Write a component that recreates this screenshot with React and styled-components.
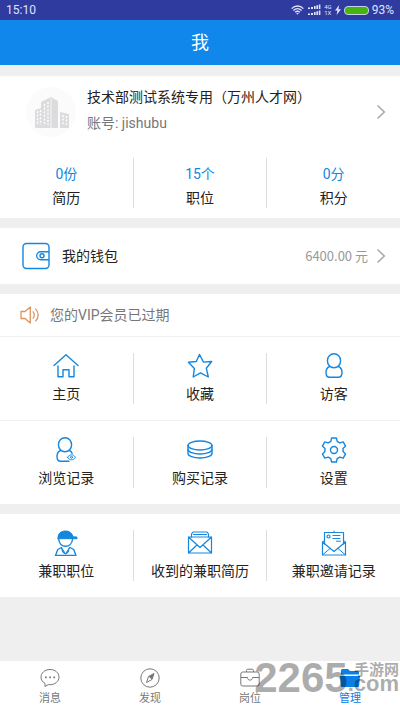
import styled, { createGlobalStyle } from "styled-components";

const BLUE = "#1587dd";

const stats = [
  { value: "0份", label: "简历" },
  { value: "15个", label: "职位" },
  { value: "0分", label: "积分" },
];

const menuRows = [
  [
    { label: "主页", Icon: HomeIcon },
    { label: "收藏", Icon: StarIcon },
    { label: "访客", Icon: VisitorIcon },
  ],
  [
    { label: "浏览记录", Icon: HistoryIcon },
    { label: "购买记录", Icon: CoinsIcon },
    { label: "设置", Icon: GearIcon },
  ],
];

const partTimeRow = [
  { label: "兼职职位", Icon: WorkerIcon },
  { label: "收到的兼职简历", Icon: ResumeMailIcon },
  { label: "兼职邀请记录", Icon: InviteIcon },
];

const tabs = [
  { label: "消息", Icon: MessageIcon },
  { label: "发现", Icon: CompassIcon },
  { label: "岗位", Icon: BriefcaseIcon },
  { label: "管理", Icon: FolderIcon, active: true },
];

function App() {
  return (
    <>
      <GlobalStyle />
      <Page>
        <StatusBar />
        <Header>
          <Title>我</Title>
        </Header>

        <Content>
          <Panel>
            <Profile>
              <Avatar />
              <ProfileText>
                <span>技术部测试系统专用（万州人才网）</span>
                <Account>账号: jishubu</Account>
              </ProfileText>
              <Chevron />
            </Profile>
            <StatRow>
              {stats.map((e) => (
                <Cell key={e.label}>
                  <StatValue>{e.value}</StatValue>
                  <span>{e.label}</span>
                </Cell>
              ))}
            </StatRow>
          </Panel>

          <Wallet>
            <WalletIcon />
            <WalletLabel>我的钱包</WalletLabel>
            <Balance>6400.00 元</Balance>
            <Chevron />
          </Wallet>

          <Panel>
            <Notice>
              <SpeakerIcon />
              您的VIP会员已过期
            </Notice>
            {menuRows.map((row, i) => (
              <MenuRow items={row} key={i} />
            ))}
          </Panel>

          <Panel>
            <MenuRow items={partTimeRow} />
          </Panel>
        </Content>

        <TabBar>
          {tabs.map(({ label, Icon, active }) => (
            <Tab href="#" key={label} $active={active}>
              <Icon />
              {label}
            </Tab>
          ))}
          <Watermark>
            <WatermarkNumber>2265</WatermarkNumber>
            <WatermarkSide>
              <WatermarkName>手游网</WatermarkName>
              <WatermarkDomain>.com</WatermarkDomain>
            </WatermarkSide>
          </Watermark>
        </TabBar>
      </Page>
    </>
  );
}

function MenuRow({ items }) {
  return (
    <Menu>
      {items.map(({ label, Icon }) => (
        <MenuCell key={label}>
          <MenuButton type="button">
            <Icon />
            {label}
          </MenuButton>
        </MenuCell>
      ))}
    </Menu>
  );
}

function StatusBar() {
  return (
    <Status>
      <Clock>15:10</Clock>
      <svg width="13" height="10" viewBox="0 0 13 10" fill="none" stroke="#dfe3ff" strokeWidth="1.3">
        <path d="M.6 3.6C4 .1 9 .1 12.4 3.6M2.4 5.5c2.4-2.4 5.8-2.4 8.2 0M4.2 7.3c1.4-1.4 3.2-1.4 4.6 0" />
        <path d="M5.2 8.1h2.6L6.5 9.8z" fill="#dfe3ff" stroke="none" />
      </svg>
      <svg width="14" height="12" viewBox="0 0 14 12" fill="#dfe3ff">
        <path d="M1 3.5h2V5H1zM4 3h2v2H4zM7 2h1.6v3H7zM9.4 1.2H11V5H9.4zM11.8.5h1.6V5h-1.6z" />
        <path d="M1 9.5h2V11H1zM4 9h2v2H4zM7 8h1.6v3H7zM9.4 7.2H11V11H9.4zM11.8 6.5h1.6V11h-1.6z" />
      </svg>
      <Network>
        <span>4G</span>
        <span>1X</span>
      </Network>
      <svg width="6" height="10" viewBox="0 0 6 10" fill="#dfe3ff">
        <path d="M4.2 0L0 5.6h2.4L1.6 10 6 4.2H3.4z" />
      </svg>
      <Battery />
      <span>93%</span>
    </Status>
  );
}

function Chevron() {
  return (
    <svg width="10" height="16" viewBox="0 0 10 16" fill="none" stroke="#aaa" strokeWidth="1.6">
      <path d="M1.5 1.5L8.3 8l-6.8 6.5" />
    </svg>
  );
}

function Avatar() {
  return (
    <svg width="50" height="50" viewBox="0 0 50 50">
      <circle cx="25" cy="25" r="25" fill="#fbfbfb" />
      <path fill="#dcdcde" d="M9 23l6-2v-6l10-5v31H9zM25 10l7 4v27h-7zM34 25l9 2v14h-9z" />
      <g stroke="#fff" strokeWidth="1.4" strokeDasharray="2 1.6" fill="none">
        <path d="M11.5 24v14M14.500 23v15M18.500 17v21M22 15v23" />
        <path d="M37 28v10M40.500 29v9" />
      </g>
      <path d="M25 11v30" stroke="#f4f4f4" />
    </svg>
  );
}

function WalletIcon() {
  return (
    <svg width="28" height="28" viewBox="0 0 28 28" fill="none" stroke={BLUE} strokeWidth="1.4">
      <rect x="1" y="1.5" width="26" height="25" rx="3.5" />
      <path d="M27 9.8h-8.3a4 4 0 0 0 0 8H27" />
      <circle cx="20" cy="13.8" r="2" />
    </svg>
  );
}

function SpeakerIcon() {
  return (
    <svg width="20" height="18" viewBox="0 0 20 18" fill="none" stroke="#dd9460" strokeWidth="1.3">
      <path d="M1 5.5h4L10.3 1v16L5 12.5H1z" strokeLinejoin="round" />
      <path d="M12.8 5.4c1.9 2 1.9 5.2 0 7.2M15.3 2.6c3.8 3.6 3.8 9.2 0 12.8" />
    </svg>
  );
}

function LineIcon({ children }) {
  return (
    <svg
      width="26"
      height="26"
      viewBox="0 0 26 26"
      fill="none"
      stroke={BLUE}
      strokeWidth="1.4"
      strokeLinejoin="round"
      strokeLinecap="round"
    >
      {children}
    </svg>
  );
}

function HomeIcon() {
  return (
    <LineIcon>
      <path d="M1 12.5L13 1.8l12 10.700" />
      <path d="M5 13v10.800h5v-7h6v7h5V13" />
    </LineIcon>
  );
}

function StarIcon() {
  return (
    <LineIcon>
      <path d="M12.500 1.500l4 7.600 8.200-.6-5.400 6.700 2 8.800-7.800-4.200-7.300 4.200 1.200-8.600-6-6.100 7.900-.8z" />
    </LineIcon>
  );
}

function VisitorIcon() {
  return (
    <LineIcon>
      <ellipse cx="13" cy="7.8" rx="6.6" ry="7" />
      <path d="M8.600 13.500C5.800 14.500 5 17 5 19.500c0 3 1.200 4.800 3.600 4.800h8.800c2.400 0 3.600-1.800 3.600-4.800 0-2.500-.8-5-3.600-6" />
    </LineIcon>
  );
}

function HistoryIcon() {
  return (
    <LineIcon>
      <ellipse cx="12" cy="7.8" rx="6.6" ry="7" />
      <path d="M7.600 13.500C4.800 14.500 4 17 4 19.500c0 3 1.200 4.800 3.600 4.800h8.400M16.400 13.500c1.400.6 2.200 1.500 2.700 2.800" />
      <path d="M14.500 20.300c2.500-3.400 5.500-3.400 8 0-2.500 3.400-5.500 3.400-8 0z" strokeWidth="1" />
      <circle cx="18.500" cy="20.300" r="1" strokeWidth="1" />
    </LineIcon>
  );
}

function CoinsIcon() {
  return (
    <LineIcon>
      <ellipse cx="13" cy="8.500" rx="12" ry="4.500" />
      <path d="M1 8.500v4c0 2.500 5.400 4.500 12 4.500s12-2 12-4.500v-4" />
      <path d="M1 12.500v4C1 19 6.400 21 13 21s12-2 12-4.500v-4" />
    </LineIcon>
  );
}

function GearIcon() {
  return (
    <LineIcon>
      <g transform="translate(13 13)">
        <path d="M-3.200-8.600L-2.400-12h4.800l.8 3.400L5.850-7.070l3.340-1.010 2.400 4.160L9.050-1.530v3.060l2.540 2.390-2.400 4.160-3.340-1.010L3.200 8.600 2.400 12h-4.800l-.8-3.400-2.650-1.530-3.340 1.010-2.400-4.160 2.540-2.390v-3.060l-2.540-2.390 2.400-4.160 3.340 1.010z" />
        <circle r="3.500" />
      </g>
    </LineIcon>
  );
}

function WorkerIcon() {
  return (
    <LineIcon>
      <path d="M5 8.200C4.800 3.500 8 1 12.500 1c3.800 0 6.700 2 7.500 5.800l4 .3v1.600H5z" fill={BLUE} strokeWidth="1" />
      <path d="M5.600 9c.6 4.300 3.300 7.300 7 7.300s6.500-3 7-7.300" />
      <path d="M8.500 17.500L4.800 19.500 2.500 25.500h20.500l-2.300-6-3.700-2" />
      <path d="M8.500 17.500l4 6.500 4-6.500-1.500 5-2.500 1.500L10 22.500z" fill={BLUE} strokeWidth="1" />
    </LineIcon>
  );
}

function ResumeMailIcon() {
  return (
    <LineIcon>
      <path d="M4.500 7V4L6 2h14l1.500 2v3M6.500 4.500h13" strokeWidth="1.200" />
      <path d="M1.500 7h23v16h-23zM1.500 7L13 17.500 24.500 7M1.500 23l8.500-8M24.500 23L16 15" strokeWidth="1.200" />
    </LineIcon>
  );
}

function InviteIcon() {
  return (
    <LineIcon>
      <path d="M3.500 14V2.500h19V14" strokeWidth="1.200" />
      <path d="M1.500 12v13h23V12L13 21.500z" strokeWidth="1.200" />
      <path d="M1.500 12l2-1.500M24.500 12l-2-1.500M13 2V1M2 24.500l7-6M24 24.500l-7-6" strokeWidth="1" />
      <circle cx="7.500" cy="6.500" r="1.500" strokeWidth="1.200" />
      <path d="M12 5.500h7M12 8.500h7M15.500 11.200h4" strokeWidth="1" />
    </LineIcon>
  );
}

function MessageIcon() {
  return (
    <svg width="20" height="20" viewBox="0 0 20 20" fill="none" stroke="#777" strokeWidth="1">
      <path d="M5 18.500v-3.200C2.400 13.900 1 11.800 1 9.300 1 5 4.800 1.500 10 1.500s9 3.300 9 7.600-4 7.600-9 7.600c-.6 0-1.200 0-1.700-.1z" />
      <path d="M5 8.500h1.700v1.700H5zM9.200 8.500h1.700v1.700H9.200zM13.400 8.500h1.700v1.700h-1.700z" fill="#777" stroke="none" />
    </svg>
  );
}

function CompassIcon() {
  return (
    <svg width="20" height="20" viewBox="0 0 20 20" fill="none" stroke="#777" strokeWidth="1">
      <circle cx="10" cy="10" r="9.2" />
      <path d="M14 5.500l-2 6-5.500 3 2-6z" />
      <path d="M8.500 8.500l3.500 3L14 5.500z" fill="#777" stroke="none" />
    </svg>
  );
}

function BriefcaseIcon() {
  return (
    <svg width="20" height="20" viewBox="0 0 20 20" fill="none" stroke="#777" strokeWidth="1">
      <rect x=".8" y="4" width="18.4" height="14" rx="2" />
      <path d="M6.500 4V2.500c0-.8.500-1.300 1.300-1.300h4.400c.8 0 1.300.5 1.300 1.300V4M1 9.500h6.500M12.500 9.500H19M7.500 9.500c0 3.500 5 3.500 5 0" />
    </svg>
  );
}

function FolderIcon() {
  return (
    <svg width="20" height="20" viewBox="0 0 20 20" fill="#0a80e6">
      <path d="M1 6.500v-4C1 1.600 1.600 1 2.500 1H8l2 2h7.500c.9 0 1.500.6 1.500 1.500v2z" />
      <path d="M0 8h20l-.8 9.500c-.1 1-.7 1.500-1.600 1.500H2.400c-.9 0-1.500-.5-1.600-1.500z" />
    </svg>
  );
}

const GlobalStyle = createGlobalStyle`
  * {
    box-sizing: border-box;
  }
  body {
    margin: 0;
    background: #efefef;
    color: #222;
    font: 14px/20px Roboto, "Noto Sans CJK SC", sans-serif;
  }
  svg {
    display: block;
    flex-shrink: 0;
  }
`;

const Page = styled.div`
  display: flex;
  flex-direction: column;
  min-height: 100vh;
`;

const Status = styled.div`
  display: flex;
  align-items: center;
  gap: 3px;
  height: 20px;
  padding: 0 6px;
  background: #2f3b9f;
  color: #dfe3ff;
  font-size: 12px;
`;

const Clock = styled.span`
  margin-right: auto;
`;

const Network = styled.div`
  display: flex;
  flex-direction: column;
  font-size: 6px;
  line-height: 6px;
`;

const Battery = styled.div`
  width: 25px;
  height: 9px;
  border: 1px solid #c8d0f0;
  border-radius: 4px;
  background: #45b40f;
`;

const Header = styled.header`
  display: flex;
  align-items: center;
  justify-content: center;
  height: 45px;
  background: #1087ea;
`;

const Title = styled.h1`
  margin: 0;
  color: #fff;
  font-size: 18px;
  font-weight: 400;
`;

const Content = styled.main`
  flex: 1;
  display: flex;
  flex-direction: column;
  gap: 10px;
  padding: 11px 0 10px;
`;

const Panel = styled.section`
  background: #fff;
`;

const Profile = styled.div`
  display: flex;
  align-items: center;
  height: 72px;
  padding: 0 14px 0 26px;
`;

const ProfileText = styled.div`
  flex: 1;
  display: flex;
  flex-direction: column;
  gap: 6px;
  margin-left: 11px;
  padding-bottom: 4px;
  white-space: nowrap;
`;

const Account = styled.span`
  color: #777;
`;

const StatRow = styled.div`
  display: flex;
  padding: 10px 0;
`;

const Cell = styled.div`
  flex: 1;
  display: flex;
  flex-direction: column;
  align-items: center;
  justify-content: center;
  gap: 4px;
  height: 50px;
  padding-top: 6px;

  & + & {
    border-left: 1px solid #ddd;
  }
`;

const StatValue = styled.span`
  color: ${BLUE};
`;

const Wallet = styled(Panel)`
  display: flex;
  align-items: center;
  height: 56px;
  padding: 0 14px 0 22px;
`;

const WalletLabel = styled.span`
  flex: 1;
  margin-left: 12px;
`;

const Balance = styled.span`
  margin-right: 8px;
  color: #999;
  font-family: "Noto Sans CJK SC", sans-serif;
  font-size: 13px;
`;

const Notice = styled.div`
  display: flex;
  align-items: center;
  gap: 10px;
  height: 42px;
  padding: 0 20px;
  color: #777;
`;

const Menu = styled.div`
  display: flex;
  padding: 16px 0;

  ${Notice} ~ & {
    border-top: 1px solid #f0f0f0;
  }
`;

const MenuCell = styled.div`
  flex: 1;

  & + & {
    border-left: 1px solid #ddd;
  }
`;

const MenuButton = styled.button`
  display: flex;
  flex-direction: column;
  align-items: center;
  gap: 5px;
  width: 100%;
  padding: 0;
  border: 0;
  background: none;
  color: inherit;
  font: inherit;
  white-space: nowrap;
`;

const TabBar = styled.nav`
  position: relative;
  display: flex;
  height: 50px;
  background: #fff;
`;

const Tab = styled.a`
  flex: 1;
  display: flex;
  flex-direction: column;
  align-items: center;
  gap: 2px;
  padding-top: 7px;
  color: ${({ $active }) => ($active ? "#0a80e6" : "#777")};
  font-size: 11px;
  line-height: 18px;
  text-decoration: none;
`;

const Watermark = styled.div`
  position: absolute;
  right: 1px;
  top: 0;
  display: flex;
  color: #000;
  opacity: 0.32;
  font-family: "Liberation Sans", "Noto Sans CJK SC", sans-serif;
  font-weight: 700;
  pointer-events: none;
`;

const WatermarkNumber = styled.span`
  font-size: 42px;
  line-height: 34px;
`;

const WatermarkSide = styled.span`
  display: flex;
  flex-direction: column;
  align-items: flex-end;
`;

const WatermarkName = styled.span`
  font-size: 15px;
  line-height: 17px;
`;

const WatermarkDomain = styled.span`
  font-size: 22px;
  line-height: 12px;
`;

export default App;
